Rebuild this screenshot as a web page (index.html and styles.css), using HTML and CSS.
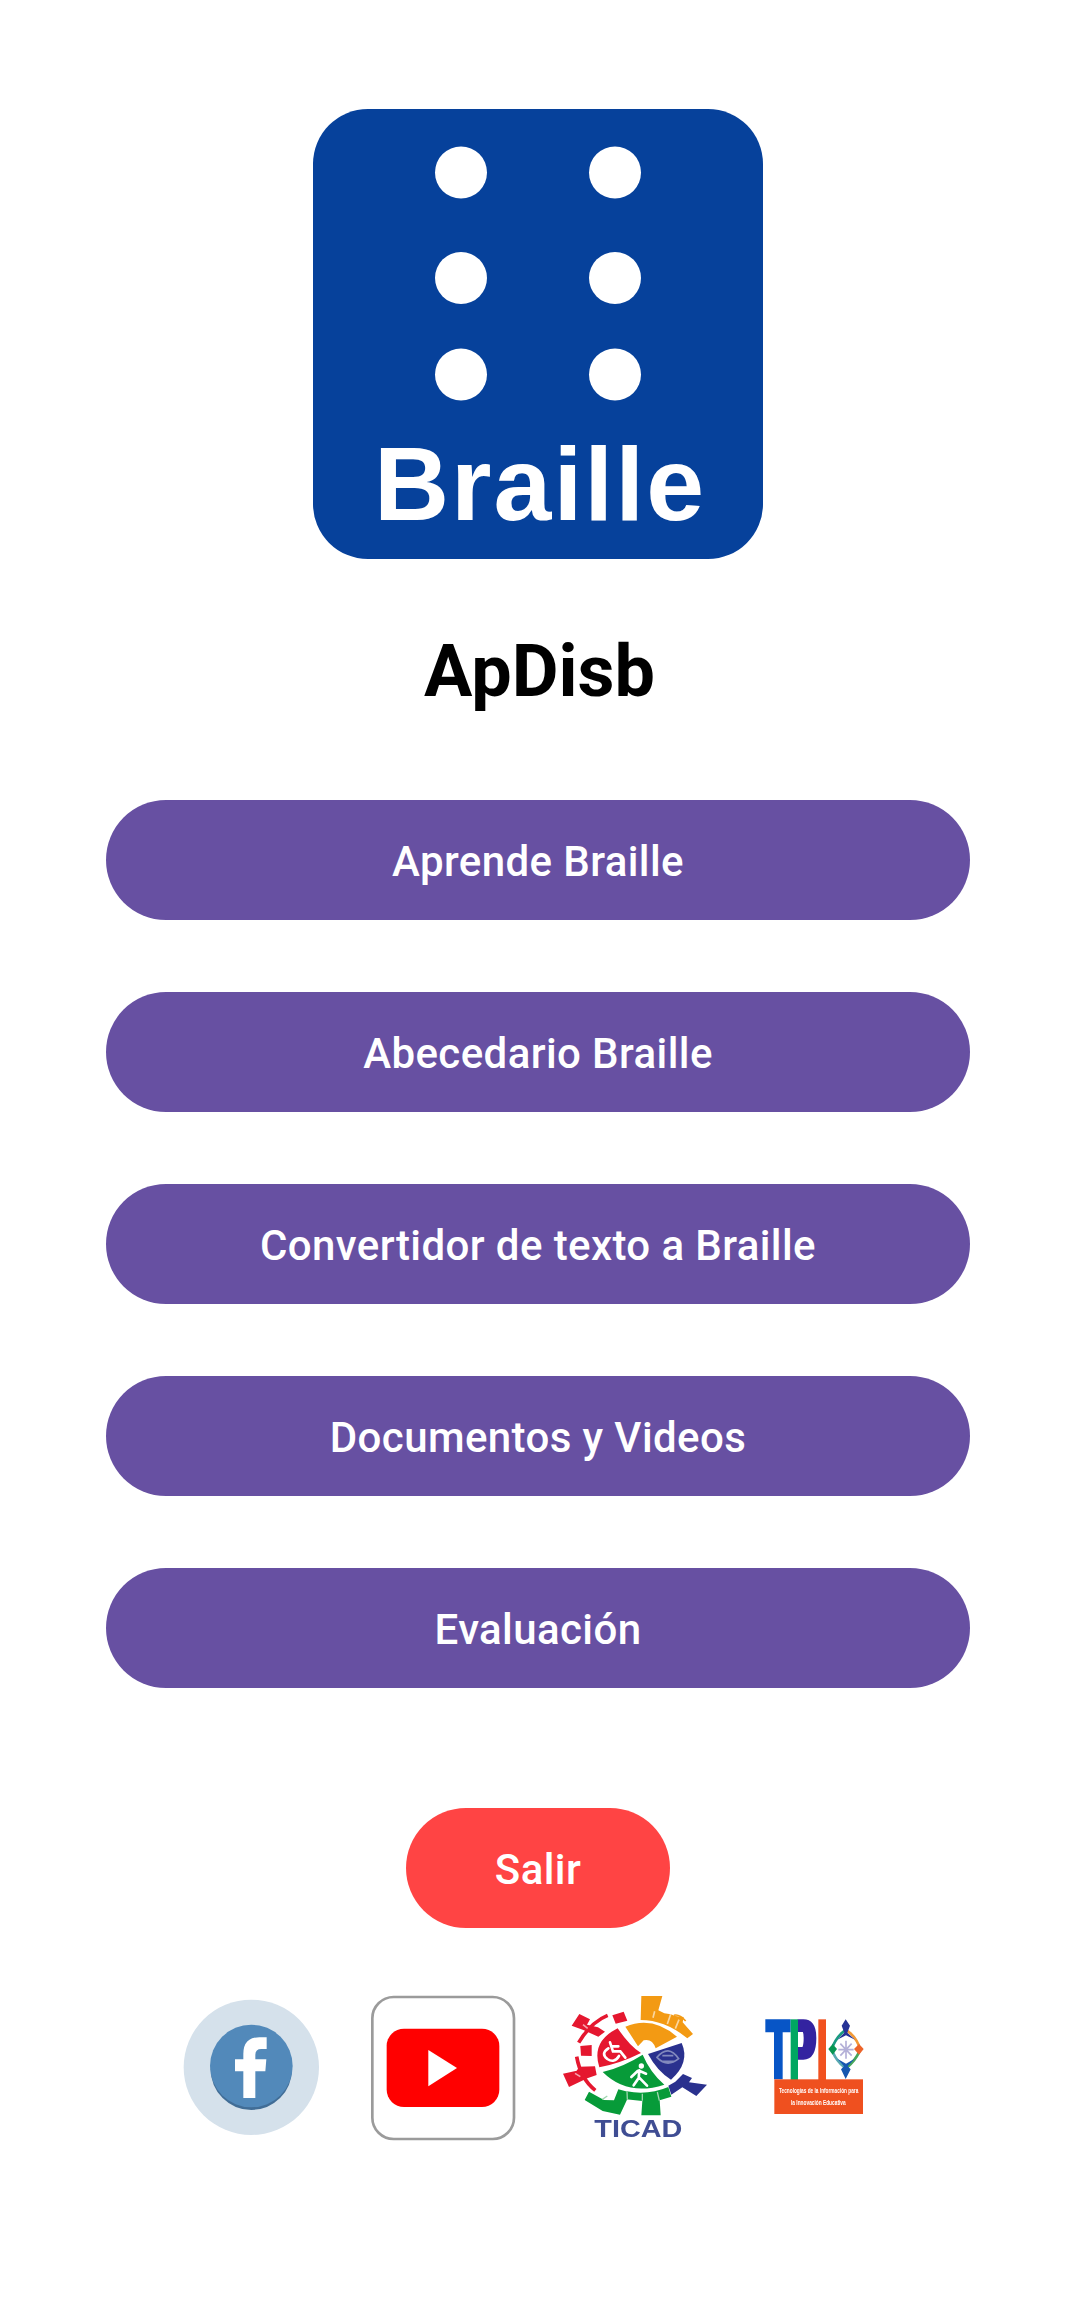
FILE: index.html
```html
<!DOCTYPE html>
<html lang="es">
<head>
<meta charset="utf-8">
<title>ApDisb</title>
<link rel="stylesheet" href="styles.css">
</head>
<body>
<main class="screen">
  <svg class="logo" viewBox="0 0 450 450" role="img" aria-label="Braille">
    <rect width="450" height="450" rx="55" fill="#06419b"/>
    <g fill="#fff">
      <circle cx="148" cy="63.500" r="26"/><circle cx="302" cy="63.500" r="26"/>
      <circle cx="148" cy="169" r="26"/><circle cx="302" cy="169" r="26"/>
      <circle cx="148" cy="265.500" r="26"/><circle cx="302" cy="265.500" r="26"/>
    </g>
    <text class="logo-word" x="61" y="411" textLength="330">Braille</text>
  </svg>
  <h1 class="title">ApDisb</h1>
  <nav class="menu">
    <button class="btn">Aprende Braille</button>
    <button class="btn">Abecedario Braille</button>
    <button class="btn">Convertidor de texto a Braille</button>
    <button class="btn">Documentos y Videos</button>
    <button class="btn">Evaluación</button>
  </nav>
  <button class="btn btn-exit">Salir</button>
  <footer class="links">
    <svg class="link-icon" viewBox="27 48 432 432" role="img" aria-label="Facebook">
      <circle cx="244" cy="262" r="203" fill="#d5e1eb"/>
      <circle cx="244" cy="268" r="122" fill="#416d96"/>
      <circle cx="244" cy="258" r="124" fill="#5289ba"/>
      <path fill="#fff" d="M220 354V274H195V238H220V222Q220 172 268 172H290V207H274Q256 207 256 224V238H289L286 274H256V354Z"/>
    </svg>
    <svg class="link-icon" viewBox="33 48 432 432" role="img" aria-label="YouTube">
      <rect x="37" y="51" width="425" height="426" rx="64" fill="#fff" stroke="#9b9b9b" stroke-width="8"/>
      <rect x="80" y="146" width="338" height="235" rx="52" fill="#f00"/>
      <path fill="#fff" d="M205 210L291 264L205 319Z"/>
    </svg>
    <svg class="link-icon" viewBox="24 33 432 432" role="img" aria-label="TICAD">
      <g fill="#e5172f">
        <path d="M188 130Q225 184 258 204Q196 235 133 247Q108 169 188 130Z"/>
        <path d="M73 87L105 103L96 119L129 127L150 140L130 155L85 135L50 122Z"/>
        <path d="M172 91L206 80L217 107L182 116Z"/>
        <path d="M76 183L110 180L110 213L78 212Z"/>
        <path d="M24 266L65 257L73 245L120 244L125 270L97 280L42 306Z"/>
      </g>
      <g fill="none" stroke="#e5172f" stroke-width="11">
        <path d="M158 91Q108 111 71 173"/><path d="M65 215Q77 282 121 316"/>
      </g>
      <g fill="#f39a13">
        <path d="M211 125Q292 91 366 155L302 190Q292 160 266 166L249 184Z"/>
        <path d="M259 33H322L310 76L328 85L347 88L361 93L386 96L383 112L414 147L397 160Q330 105 257 105Z"/>
      </g>
      <path d="M357 91Q372 86 392 108" fill="none" stroke="#f39a13" stroke-width="5"/>
      <g fill="#2a318e">
        <path d="M279 207L380 174Q406 233 348 284Q307 259 279 207Z"/>
        <path d="M340 302L361 290L384 267L411 279L402 292L456 299L424 333L382 307L349 329Z"/>
      </g>
      <g fill="#079b39">
        <path d="M143 261Q205 246 263 209Q286 263 328 299Q218 335 143 261Z"/>
        <path d="M102 320L147 345L177 346L190 313L218 320L217 342L195 389L143 378L89 345Z"/>
        <path d="M215 319Q281 331 340 306L349 335L314 346L317 391H259L262 348L213 343Z"/>
      </g>
      <g fill="none" stroke="#fff" stroke-width="8" stroke-linecap="round">
        <path d="M165 172L174 199H196L211 218M172 184H190M160 190Q136 206 157 222Q178 236 192 213"/>
        <path d="M253 256L251 279L236 301M252 277L276 302M248 258L229 276M256 259L273 266"/>
      </g>
      <circle cx="259" cy="243" r="8" fill="#fff"/>
      <path d="M306 217Q340 176 371 221Q336 249 306 217ZM320 229H359M322 212H355" fill="none" stroke="#8289bd" stroke-width="5"/>
      <path d="M216 319L217 344M262 326V347M307 321L313 347M142 343L157 333" stroke="#a0d5af" stroke-width="4"/>
      <path d="M84 119L98 130M60 265L76 275M299 79L294 98M347 88L337 117M372 104L361 131" stroke="#fff" stroke-opacity=".6" stroke-width="5"/>
      <text class="ticad-word" x="118" y="457" textLength="264" lengthAdjust="spacingAndGlyphs">TICAD</text>
    </svg>
    <svg class="link-icon" viewBox="0 -27 432 432" role="img" aria-label="TPI">
      <path fill="#0755c6" d="M31 43H107V82H83V223H57V82H31Z"/>
      <path d="M128 62H145Q165 62 165 99Q165 145 145 145H128" fill="none" stroke="#3323a0" stroke-width="38"/>
      <rect x="107" y="43" width="22" height="182" fill="#00a761"/>
      <rect x="190" y="43" width="23" height="182" fill="#f1511f"/>
      <g fill="none" stroke-width="8">
        <path d="M269 77Q248 92 234 122" stroke="#1a9b80"/>
        <path d="M276 77Q299 92 312 122" stroke="#f29a36"/>
        <path d="M233 140Q245 169 269 187" stroke="#58a9b1"/>
        <path d="M313 140Q300 168 276 187" stroke="#47a65b"/>
      </g>
      <path fill="#263396" d="M272 43L285 62L277 83L300 104L273 91L247 104L268 83L260 62Z"/>
      <path fill="#1557b0" d="M272 222L258 193L267 184L247 161L273 176L299 161L278 184L287 193Z"/>
      <path fill="#079652" d="M220 132L233 117L246 132L233 149Z"/>
      <path fill="#ed642a" d="M297 132L312 117L326 132L312 149Z"/>
      <path d="M256 116L290 152M290 116L256 152M273 107V161M250 134H296" stroke="#b4b0d8" stroke-width="5"/>
      <rect x="58" y="223" width="266" height="104" fill="#ef501f"/>
      <g class="tpi-caption">
        <text x="72" y="264" textLength="238" lengthAdjust="spacingAndGlyphs">Tecnologías de la Información para</text>
        <text x="108" y="299" textLength="164" lengthAdjust="spacingAndGlyphs">la Innovación Educativa</text>
      </g>
    </svg>
  </footer>
</main>
</body>
</html>
```
FILE: styles.css
```css
* {
  box-sizing: border-box;
}

body {
  margin: 0;
  background: #fff;
  font-family: Roboto, "Liberation Sans", sans-serif;
}

.screen {
  display: flex;
  flex-direction: column;
  align-items: center;
  width: 1076px;
  min-height: 2305px;
  padding-top: 109px;
}

.logo {
  display: block;
  width: 450px;
  height: 450px;
}

.logo-word {
  fill: #fff;
  font: bold 104px "Liberation Sans", Arial, sans-serif;
}

.title {
  margin: 65px 0 80px;
  padding-left: 3px;
  font-size: 72px;
  font-weight: 700;
  line-height: 96px;
  color: #000;
}

.menu {
  display: flex;
  flex-direction: column;
  gap: 72px;
}

.btn {
  width: 864px;
  height: 120px;
  padding: 5px 0 0;
  border: 0;
  border-radius: 60px;
  background: #6750a2;
  color: #fff;
  font: 500 42px/1.2 Roboto, "Liberation Sans", sans-serif;
  letter-spacing: 0.4px;
}

.btn-exit {
  width: 264px;
  margin-top: 120px;
  background: #ff4444;
}

.links {
  display: flex;
  gap: 48px;
  margin-top: 68px;
  padding-left: 2px;
}

.link-icon {
  display: block;
  width: 144px;
  height: 144px;
  overflow: visible;
  filter: blur(0.7px);
}

.ticad-word {
  fill: #3f4d93;
  font: bold 70px "Liberation Sans", Arial, sans-serif;
}

.tpi-caption {
  fill: #fff;
  font: bold 23px "Liberation Sans", Arial, sans-serif;
}
```
